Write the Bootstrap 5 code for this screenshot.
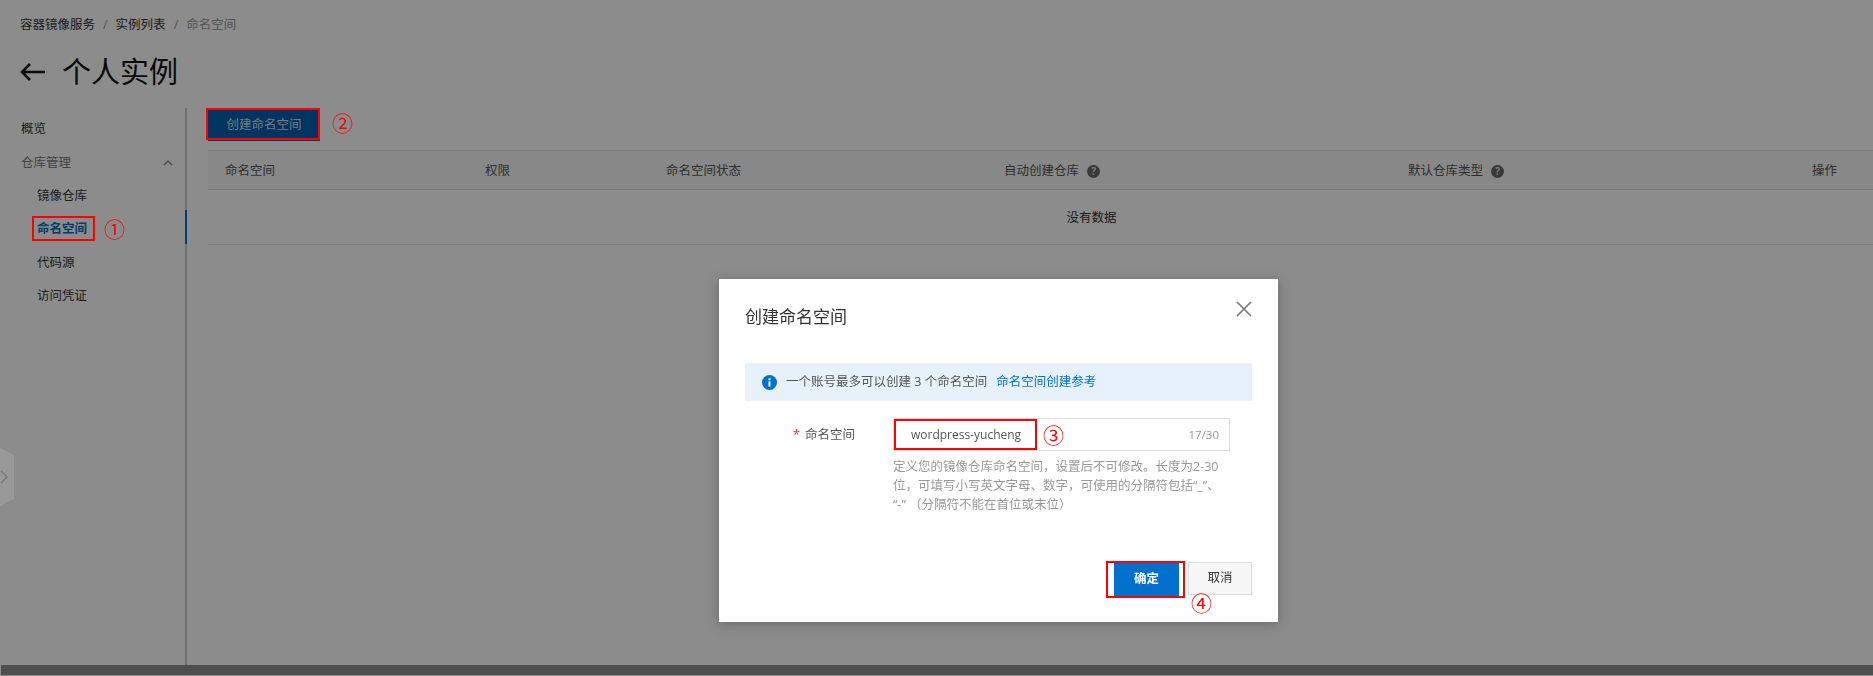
<!DOCTYPE html>
<html lang="zh-CN">
<head>
    <meta charset="UTF-8">
    <title>命名空间</title>
    <link href="https://cdn.jsdelivr.net/npm/bootstrap@5.3.0/dist/css/bootstrap.min.css" rel="stylesheet">
    <style>
        body {
            margin: 0;
            background: #fff;
            font-family: "Open Sans", "Noto Sans CJK SC", sans-serif;
            font-size: 12.5px;
            color: #333;
            overflow: hidden;
        }
        .modal-backdrop { --bs-backdrop-opacity: .45; }
        .page-wrap { height: 676px; display: flex; flex-direction: column; }
        .page-head { padding: 17px 20px 0; height: 108px; flex: none; }
        .crumbs { --bs-breadcrumb-divider-color: #999; --bs-breadcrumb-margin-bottom: 0; --bs-breadcrumb-font-size: 12.5px; line-height: 16px; }
        .crumbs .breadcrumb-item { padding-left: 8px; }
        .crumbs .breadcrumb-item::before { padding-right: 8px; }
        .crumbs .breadcrumb-item:first-child { padding-left: 0; }
        .crumbs .breadcrumb-item.active { color: #999; }
        .page-title { font-size: 29px; font-weight: 400; line-height: 40px; margin: 19px 0 0; color: #111; display: flex; align-items: center; gap: 17px; }
        .page-main { flex: 1; display: flex; min-height: 0; }
        .side-nav { width: 187px; flex: none; border-right: 2px solid #ccc; padding-top: 2px; }
        .side-link { display: flex; align-items: center; height: 33.4px; padding: 6px 0 0 21px; color: #333; text-decoration: none; position: relative; margin-right: -2px; }
        .side-link.sub { padding-left: 37px; }
        .side-link.group { color: #777; justify-content: space-between; padding-right: 14px; }
        .side-link.current { color: #0070cc; font-weight: 700; border-right: 2px solid #0070cc; }
        .main-pane { flex: 1; min-width: 0; padding-left: 21px; }
        .create-wrap { height: 42px; display: flex; align-items: flex-start; }
        .create-btn { --bs-btn-font-size: 12.5px; --bs-btn-bg: #0062b4; --bs-btn-color: #ddd; --bs-btn-border-radius: 0; --bs-btn-border-width: 0; width: 112px; height: 33px; padding: 2px 0 0; position: relative; }
        .ns-table { table-layout: fixed; margin: 0; --bs-table-border-color: #e3e3e3; color: #333; }
        .ns-table th, .ns-table td { font-size: 12.5px; font-weight: 400; vertical-align: middle; }
        .ns-table th { background: #f7f7f7; height: 39px; padding: 3px 0 0 17px; color: #555; border-top: 1px solid #e3e3e3; }
        .ns-table td { height: 55px; text-align: center; padding: 3px 0 0 102px; }
        .ns-table col.c1 { width: 260px; }
        .ns-table col.c2 { width: 181px; }
        .ns-table col.c3 { width: 338px; }
        .ns-table col.c4 { width: 404px; }
        .ns-table col.c5 { width: 300px; }
        .ns-table th.last { text-align: right; padding-right: 36px; }
        .help-dot { display: inline-flex; width: 13px; height: 13px; border-radius: 50%; background: #666; color: #ddd; font-size: 10px; font-weight: 700; align-items: center; justify-content: center; margin-left: 8px; }
        .page-bottom { height: 10px; background: #8e8e8e; flex: none; margin: 0 0 1px 1px; }
        .mark-box { position: absolute; border: 2px solid #f00; z-index: 1051; pointer-events: none; }
        .mark-num { color: #f00; font-family: "Noto Sans CJK SC", sans-serif; font-size: 21px; line-height: 1; position: relative; z-index: 1051; }
        .mark-num.nav-num { position: absolute; left: 104px; top: 8px; font-weight: 400; }
        .mark-num.btn-num { margin: 4px 0 0 12px; }
        .side-handle { position: fixed; left: 0; top: 448px; width: 14px; height: 58px; background: #999; clip-path: polygon(0 0, 100% 12%, 100% 88%, 0 100%); z-index: 1051; display: flex; align-items: center; }
        .ns-dialog.modal-dialog { max-width: 559px; width: 559px; margin: 279px 0 0 719px; }
        .ns-modal { border: 0; border-radius: 0; height: 343px; padding: 0 26px; box-shadow: 0 2px 12px rgba(0,0,0,.25); }
        .ns-head { display: flex; justify-content: space-between; height: 84px; padding-top: 25px; }
        .ns-head h5 { font-size: 17px; font-weight: 400; margin: 0; line-height: 26px; color: #333; }
        .ns-close { background: none; border: 0; padding: 0; height: 16px; line-height: 0; margin-top: -3px; }
        .ns-alert { --bs-alert-padding-x: 16px; --bs-alert-padding-y: 0; --bs-alert-margin-bottom: 0; --bs-alert-border-radius: 0; --bs-alert-border-color: transparent; --bs-alert-bg: #e6f1fb; --bs-alert-color: #555; height: 38px; display: flex; align-items: center; gap: 9px; }
        .ns-alert a { color: #0070cc; text-decoration: none; margin-left: 9px; }
        .ns-row { display: flex; margin-top: 17px; }
        .ns-label { width: 148px; flex: none; text-align: right; padding-right: 38px; line-height: 33px; color: #555; }
        .ns-label i { color: #e33; font-style: normal; margin-right: 5px; }
        .ns-field { width: 337px; height: 33px; border: 1px solid #ddd; display: flex; align-items: center; }
        .ns-input { width: 143px; height: 31px; border: 2px solid #f00; border-radius: 0; padding: 0 0 0 15px; font-size: 12px; color: #555; font-family: "Open Sans", sans-serif; background: #fff; }
        .ns-input:focus { border-color: #f00; box-shadow: none; }
        .ns-count { margin-left: auto; padding-right: 10px; color: #999; font-size: 11.5px; }
        .ns-field .mark-num { margin-left: 6px; }
        .ns-hint { margin: 6px 0 0 148px; width: 337px; line-height: 19px; color: #999; }
        .ns-foot { display: flex; justify-content: flex-end; margin-top: 48px; position: relative; }
        .ok-wrap { width: 79px; height: 37px; margin-right: 3px; border: 2px solid #f00; padding-left: 6px; margin-top: -1px; }
        .ok-btn { --bs-btn-font-size: 12.5px; --bs-btn-font-weight: 700; --bs-btn-bg: #0070cc; --bs-btn-color: #fff; --bs-btn-border-width: 0; --bs-btn-border-radius: 0; width: 65px; height: 33px; padding: 0; display: block; }
        .no-btn { --bs-btn-font-size: 12.5px; --bs-btn-bg: #f7f7f7; --bs-btn-color: #333; --bs-btn-border-color: #ddd; --bs-btn-border-radius: 0; width: 64px; height: 33px; padding: 0; }
        .ns-foot .mark-num { position: absolute; right: 40px; top: 30px; }
    </style>
</head>
<body>
    <div class="page-wrap">
        <div class="page-head">
            <nav>
                <ol class="breadcrumb crumbs">
                    <li class="breadcrumb-item">容器镜像服务</li>
                    <li class="breadcrumb-item">实例列表</li>
                    <li class="breadcrumb-item active">命名空间</li>
                </ol>
            </nav>
            <h1 class="page-title">
                <svg width="25" height="20" viewBox="0 0 25 20"><path d="M25 10H2M10 2l-8 8 8 8" fill="none" stroke="#111" stroke-width="2.6"/></svg>
                个人实例
            </h1>
        </div>
        <div class="page-main">
            <div class="side-nav">
                <a class="side-link" href="#">概览</a>
                <a class="side-link group" href="#">仓库管理
                    <svg width="10" height="6" viewBox="0 0 10 6"><path d="M1 5l4-4 4 4" fill="none" stroke="#777" stroke-width="1.2"/></svg>
                </a>
                <a class="side-link sub" href="#">镜像仓库</a>
                <a class="side-link sub current" href="#">命名空间
                    <span class="mark-box" style="left:32px;top:6px;width:63px;height:25px"></span>
                    <span class="mark-num nav-num">①</span>
                </a>
                <a class="side-link sub" href="#">代码源</a>
                <a class="side-link sub" href="#">访问凭证</a>
            </div>
            <div class="main-pane">
                <div class="create-wrap">
                    <button class="btn create-btn" type="button">创建命名空间
                        <span class="mark-box" style="left:-2px;top:0;width:114px;height:32px"></span>
                    </button>
                    <span class="mark-num btn-num">②</span>
                </div>
                <table class="table ns-table">
                    <colgroup><col class="c1"><col class="c2"><col class="c3"><col class="c4"><col class="c5"><col></colgroup>
                    <thead>
                        <tr>
                            <th>命名空间</th>
                            <th>权限</th>
                            <th>命名空间状态</th>
                            <th>自动创建仓库<span class="help-dot">?</span></th>
                            <th>默认仓库类型<span class="help-dot">?</span></th>
                            <th class="last">操作</th>
                        </tr>
                    </thead>
                    <tbody>
                        <tr><td colspan="6">没有数据</td></tr>
                    </tbody>
                </table>
            </div>
        </div>
        <div class="page-bottom"></div>
    </div>

    <div class="side-handle">
        <svg width="8" height="16" viewBox="0 0 8 16"><path d="M1 2l6 6-6 6" fill="none" stroke="#777" stroke-width="1.4"/></svg>
    </div>
    <div class="modal-backdrop show"></div>

    <div class="modal d-block" tabindex="-1">
        <div class="modal-dialog ns-dialog">
            <div class="modal-content ns-modal">
                <div class="ns-head">
                    <h5>创建命名空间</h5>
                    <button class="ns-close" type="button">
                        <svg width="16" height="16" viewBox="0 0 16 16"><path d="M1 1l14 14M15 1L1 15" stroke="#777" stroke-width="1.6"/></svg>
                    </button>
                </div>
                <div class="alert ns-alert">
                    <svg width="15" height="15" viewBox="0 0 15 15"><circle cx="7.5" cy="7.5" r="7.5" fill="#0070cc"/><rect x="6.5" y="6.5" width="2" height="5" fill="#fff"/><rect x="6.5" y="3.3" width="2" height="2" fill="#fff"/></svg>
                    <span>一个账号最多可以创建 3 个命名空间<a href="#">命名空间创建参考</a></span>
                </div>
                <div class="ns-row">
                    <label class="ns-label"><i>*</i>命名空间</label>
                    <div class="ns-field">
                        <input class="form-control ns-input" type="text" value="wordpress-yucheng">
                        <span class="mark-num">③</span>
                        <span class="ns-count">17/30</span>
                    </div>
                </div>
                <div class="ns-hint">定义您的镜像仓库命名空间，设置后不可修改。长度为2-30位，可填写小写英文字母、数字，可使用的分隔符包括“_”、“-” （分隔符不能在首位或末位）</div>
                <div class="ns-foot">
                    <div class="ok-wrap"><button class="btn ok-btn" type="button">确定</button></div>
                    <button class="btn no-btn" type="button">取消</button>
                    <span class="mark-num">④</span>
                </div>
            </div>
        </div>
    </div>
    <script src="https://cdn.jsdelivr.net/npm/bootstrap@5.3.0/dist/js/bootstrap.bundle.min.js"></script>
</body>
</html>
